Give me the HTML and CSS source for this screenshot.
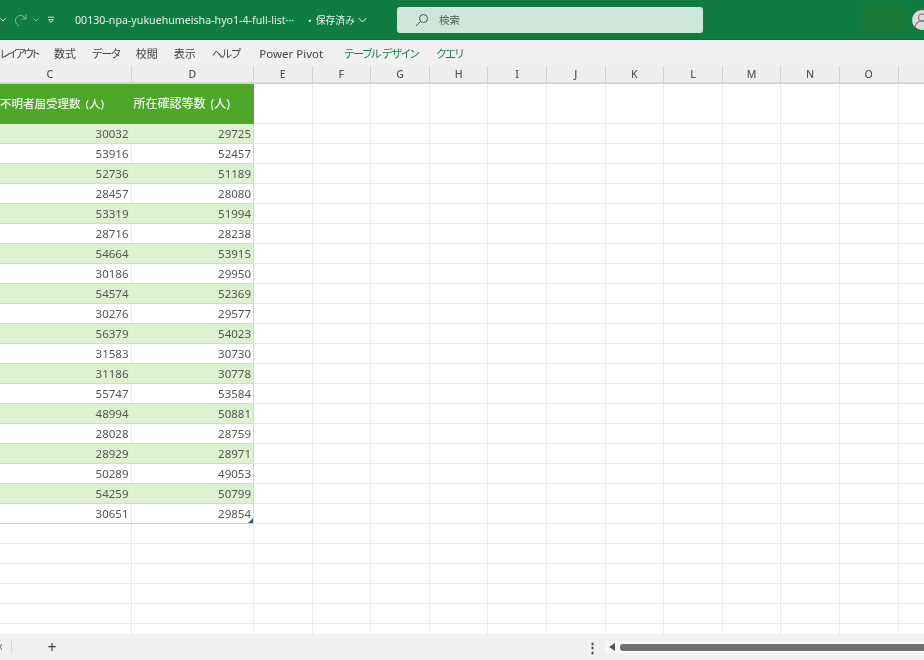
FILE: index.html
```html
<!DOCTYPE html>
<html lang="ja">
<head>
    <meta charset="UTF-8" />
    <meta name="viewport" content="width=device-width, initial-scale=1.0" />
    <title>00130-npa-yukuehumeisha-hyo1-4-full-list</title>
    <link rel="stylesheet" href="styles.css">
</head>
<body>
    <div class="app">
        <!-- Title bar -->
        <header class="titlebar">
            <div class="qat">
                <svg class="chev-small undo-chev" viewBox="0 0 6 4"><path d="M.5.5 3 3 5.500.5"/></svg>
                <svg class="redo" viewBox="0 0 14 14"><path d="M12 1.500V6H7.500M12 6C10 3 7.500 2 5.500 2.500 2.500 3.200 1 6 1.500 8.500 1.900 10.500 3.200 12 5 12.800"/></svg>
                <svg class="chev-small redo-chev" viewBox="0 0 6 4"><path d="M.5.5 3 3 5.500.5"/></svg>
                <svg class="qat-more" viewBox="0 0 8 8"><path d="M1 1.200H7M1.500 3.500 4 6.500 6.500 3.500Z"/></svg>
            </div>
            <span class="filename">00130-npa-yukuehumeisha-hyo1-4-full-list···</span>
            <span class="saved"><span class="saved-dot">•</span>保存済み</span>
            <svg class="saved-chev" viewBox="0 0 9 6"><path d="M.5 1 4.500 5 8.500 1"/></svg>
            <div class="search">
                <svg class="search-icon" viewBox="0 0 14 14"><circle cx="8.500" cy="5.500" r="4"/><path d="M5.500 8.500 1 13"/></svg>
                <span>検索</span>
            </div>
            <div class="patch"></div>
            <div class="avatar">
                <svg viewBox="0 0 20 20"><circle cx="10" cy="7.500" r="3.500"/><path d="M3 17c.8-4 3.500-6 7-6s6.200 2 7 6"/></svg>
            </div>
        </header>

        <!-- Ribbon tabs -->
        <nav class="ribbon">
            <span class="tab kana tab-layout">レイアウト</span>
            <span class="tab">数式</span>
            <span class="tab kana">データ</span>
            <span class="tab">校閲</span>
            <span class="tab">表示</span>
            <span class="tab kana">ヘルプ</span>
            <span class="tab tab-pivot">Power Pivot</span>
            <span class="tab kana context">テーブル デザイン</span>
            <span class="tab kana context tab-query">クエリ</span>
        </nav>

        <!-- Sheet -->
        <main class="sheet">
            <table class="grid">
                <colgroup>
                    <col class="col-c">
                    <col class="col-d">
                    <col class="col-e"><col class="col-f"><col class="col-g">
                    <col class="col-h"><col class="col-i"><col class="col-j">
                    <col class="col-k"><col class="col-l"><col class="col-m">
                    <col class="col-n"><col class="col-o"><col class="col-p">
                </colgroup>
                <thead>
                    <tr class="letters">
                        <th class="letter-c">C</th><th>D</th><th>E</th><th>F</th><th>G</th><th>H</th><th>I</th>
                        <th>J</th><th>K</th><th>L</th><th>M</th><th>N</th><th>O</th><th></th>
                    </tr>
                </thead>
                <tbody id="rows">
                    <tr class="head-row">
                        <td class="head-cell head-c">不明者届受理数 (人)</td>
                        <td class="head-cell">所在確認等数 (人)</td>
                        <td></td><td></td><td></td><td></td><td></td><td></td><td></td><td></td><td></td><td></td><td></td><td></td>
                    </tr>
                    <tr class="band"><td class="num">30032</td><td class="num">29725</td><td></td><td></td><td></td><td></td><td></td><td></td><td></td><td></td><td></td><td></td><td></td><td></td></tr>
                    <tr><td class="num">53916</td><td class="num">52457</td><td></td><td></td><td></td><td></td><td></td><td></td><td></td><td></td><td></td><td></td><td></td><td></td></tr>
                    <tr class="band"><td class="num">52736</td><td class="num">51189</td><td></td><td></td><td></td><td></td><td></td><td></td><td></td><td></td><td></td><td></td><td></td><td></td></tr>
                    <tr><td class="num">28457</td><td class="num">28080</td><td></td><td></td><td></td><td></td><td></td><td></td><td></td><td></td><td></td><td></td><td></td><td></td></tr>
                    <tr class="band"><td class="num">53319</td><td class="num">51994</td><td></td><td></td><td></td><td></td><td></td><td></td><td></td><td></td><td></td><td></td><td></td><td></td></tr>
                    <tr><td class="num">28716</td><td class="num">28238</td><td></td><td></td><td></td><td></td><td></td><td></td><td></td><td></td><td></td><td></td><td></td><td></td></tr>
                    <tr class="band"><td class="num">54664</td><td class="num">53915</td><td></td><td></td><td></td><td></td><td></td><td></td><td></td><td></td><td></td><td></td><td></td><td></td></tr>
                    <tr><td class="num">30186</td><td class="num">29950</td><td></td><td></td><td></td><td></td><td></td><td></td><td></td><td></td><td></td><td></td><td></td><td></td></tr>
                    <tr class="band"><td class="num">54574</td><td class="num">52369</td><td></td><td></td><td></td><td></td><td></td><td></td><td></td><td></td><td></td><td></td><td></td><td></td></tr>
                    <tr><td class="num">30276</td><td class="num">29577</td><td></td><td></td><td></td><td></td><td></td><td></td><td></td><td></td><td></td><td></td><td></td><td></td></tr>
                    <tr class="band"><td class="num">56379</td><td class="num">54023</td><td></td><td></td><td></td><td></td><td></td><td></td><td></td><td></td><td></td><td></td><td></td><td></td></tr>
                    <tr><td class="num">31583</td><td class="num">30730</td><td></td><td></td><td></td><td></td><td></td><td></td><td></td><td></td><td></td><td></td><td></td><td></td></tr>
                    <tr class="band"><td class="num">31186</td><td class="num">30778</td><td></td><td></td><td></td><td></td><td></td><td></td><td></td><td></td><td></td><td></td><td></td><td></td></tr>
                    <tr><td class="num">55747</td><td class="num">53584</td><td></td><td></td><td></td><td></td><td></td><td></td><td></td><td></td><td></td><td></td><td></td><td></td></tr>
                    <tr class="band"><td class="num">48994</td><td class="num">50881</td><td></td><td></td><td></td><td></td><td></td><td></td><td></td><td></td><td></td><td></td><td></td><td></td></tr>
                    <tr><td class="num">28028</td><td class="num">28759</td><td></td><td></td><td></td><td></td><td></td><td></td><td></td><td></td><td></td><td></td><td></td><td></td></tr>
                    <tr class="band"><td class="num">28929</td><td class="num">28971</td><td></td><td></td><td></td><td></td><td></td><td></td><td></td><td></td><td></td><td></td><td></td><td></td></tr>
                    <tr><td class="num">50289</td><td class="num">49053</td><td></td><td></td><td></td><td></td><td></td><td></td><td></td><td></td><td></td><td></td><td></td><td></td></tr>
                    <tr class="band"><td class="num">54259</td><td class="num">50799</td><td></td><td></td><td></td><td></td><td></td><td></td><td></td><td></td><td></td><td></td><td></td><td></td></tr>
                    <tr class="last"><td class="num">30651</td><td class="num last-cell">29854<span class="resize"></span></td><td></td><td></td><td></td><td></td><td></td><td></td><td></td><td></td><td></td><td></td><td></td><td></td></tr>
                    <tr><td></td><td></td><td></td><td></td><td></td><td></td><td></td><td></td><td></td><td></td><td></td><td></td><td></td><td></td></tr>
                    <tr><td></td><td></td><td></td><td></td><td></td><td></td><td></td><td></td><td></td><td></td><td></td><td></td><td></td><td></td></tr>
                    <tr><td></td><td></td><td></td><td></td><td></td><td></td><td></td><td></td><td></td><td></td><td></td><td></td><td></td><td></td></tr>
                    <tr><td></td><td></td><td></td><td></td><td></td><td></td><td></td><td></td><td></td><td></td><td></td><td></td><td></td><td></td></tr>
                    <tr><td></td><td></td><td></td><td></td><td></td><td></td><td></td><td></td><td></td><td></td><td></td><td></td><td></td><td></td></tr>
                    <tr><td></td><td></td><td></td><td></td><td></td><td></td><td></td><td></td><td></td><td></td><td></td><td></td><td></td><td></td></tr>
                </tbody>
            </table>
        </main>

        <!-- Sheet tabs and scroll bar -->
        <footer class="statusbar">
            <span class="tab-edge">
                <svg class="tab-nav" viewBox="0 0 2 6"><path d="M2 0 0 3 2 6"/></svg>
            </span>
            <span class="add-sheet">+</span>
            <span class="kebab">⋮</span>
            <div class="scroll">
                <span class="scroll-arrow"></span>
                <span class="scroll-thumb"></span>
            </div>
        </footer>
    </div>
</body>
</html>
```
FILE: styles.css
```css
/* Global styles */
* {
    box-sizing: border-box;
}

html,
body {
    margin: 0;
    height: 100%;
    overflow: hidden;
    background-color: #fff;
}

body {
    font-family: "Noto Sans", "Noto Sans CJK JP", sans-serif;
    color: #444;
}

.app {
    display: flex;
    flex-direction: column;
    width: 924px;
    height: 660px;
    overflow: hidden;
    filter: blur(0.45px);
}

/* Title bar */
.titlebar {
    display: flex;
    align-items: center;
    flex: 0 0 40px;
    background-color: #107c41;
    color: #e6f2ea;
    border-bottom: 1px solid #0f6b3a;
    overflow: hidden;
}

.titlebar > * {
    flex: none;
}

.qat {
    display: flex;
    align-items: center;
    width: 75px;
    height: 100%;
}

.qat svg {
    fill: none;
    stroke: #cfe5da;
    stroke-width: 1;
}

.chev-small {
    width: 6px;
    height: 4px;
}

.undo-chev {
    stroke: #e6f2ea;
}

.redo {
    width: 14px;
    height: 14px;
    margin-left: 8px;
    opacity: 0.6;
}

.redo-chev {
    margin-left: 5px;
    opacity: 0.6;
}

.qat-more {
    width: 8px;
    height: 8px;
    margin-left: 8px;
}

.filename {
    width: 233px;
    font-size: 10.65px;
    white-space: nowrap;
}

.saved {
    width: 50px;
    font-size: 9.800px;
    white-space: nowrap;
}

.saved-dot {
    margin-right: 4px;
}

.saved-chev {
    width: 9px;
    height: 6px;
    fill: none;
    stroke: #e6f2ea;
}

.search {
    display: flex;
    align-items: center;
    width: 306px;
    height: 26px;
    margin-left: 30px;
    padding-left: 18px;
    background-color: #cfe5da;
    border-radius: 3px;
    color: #44635a;
    font-size: 10.5px;
}

.search-icon {
    width: 14px;
    height: 14px;
    margin-right: 10px;
    fill: none;
    stroke: #2f5f4c;
    stroke-width: 1;
}

.patch {
    width: 44px;
    height: 28px;
    margin-left: 158px;
    background-color: #1b7a39;
}

.avatar {
    width: 20px;
    height: 20px;
    margin-left: 7px;
    background-color: #dcdcdc;
    border-radius: 50%;
}

.avatar svg {
    display: block;
    width: 20px;
    height: 20px;
    fill: none;
    stroke: #777;
    stroke-width: 1.2;
}

/* Ribbon */
.ribbon {
    display: flex;
    align-items: center;
    gap: 16px;
    flex: 0 0 26px;
    background-color: #f0f0f0;
    font-size: 11px;
    font-feature-settings: "palt";
    color: #444;
    white-space: nowrap;
}

.tab.kana {
    letter-spacing: -1px;
}

.tab-layout {
    width: 38px;
}

.tab.tab-layout {
    letter-spacing: -2px;
}

.tab-pivot {
    margin-left: 3px;
    margin-right: 5px;
    font-size: 11.5px;
}

.tab.context {
    color: #1f7a4d;
}

.tab-query {
    margin-left: 2px;
}

/* Sheet */
.sheet {
    flex: 1;
    overflow: hidden;
    background-color: #fff;
}

.grid {
    table-layout: fixed;
    border-collapse: collapse;
    width: 956.700px;
}

.col-c { width: 131px; }
.col-d { width: 122.500px; }
.col-e, .col-f, .col-g, .col-h, .col-i, .col-j,
.col-k, .col-l, .col-m, .col-n, .col-o, .col-p { width: 58.600px; }

.letters th {
    height: 17px;
    padding: 0;
    background-color: #eeeeee;
    border-right: 1px solid #d4d4d4;
    border-bottom: 1px solid #cfcfcf;
    box-shadow: inset 0 -1px #d8d8d8;
    color: #555;
    font-size: 10.5px;
    font-weight: 500;
    text-align: center;
}

.letters .letter-c {
    padding-right: 31px;
}

.grid td {
    height: 20px;
    padding: 0 2px;
    border-right: 1px solid #ececec;
    border-bottom: 1px solid #ececec;
    font-size: 11.5px;
    line-height: 18px;
}

.grid .head-row td {
    height: 40px;
}

.grid .head-cell {
    padding-top: 2px;
    background-color: #4ea72a;
    border-color: #4ea72a;
    color: #eef7e8;
    font-size: 12px;
    font-weight: 500;
    word-spacing: 2px;
    white-space: nowrap;
    padding-left: 2px;
}

.grid .head-c {
    padding-left: 0;
    font-size: 11.5px;
}

.grid .num {
    padding-top: 1px;
    text-align: right;
    color: #555;
    border-bottom-color: #c6e6b5;
}

.grid .band .num {
    background-color: #dcf2d0;
}

.grid .num + .num {
    border-right-color: #c6e6b5;
}

.grid .last .num {
    border-bottom: 1px solid #b6e3a0;
}

.last-cell {
    position: relative;
}

.resize {
    position: absolute;
    right: 0;
    bottom: 0;
    width: 0;
    height: 0;
    border-left: 5px solid transparent;
    border-bottom: 5px solid #2f5597;
}

/* Status bar */
.statusbar {
    display: flex;
    align-items: center;
    flex: 0 0 26px;
    background-color: #f0f0f0;
    font-size: 16px;
    color: #444;
}

.tab-edge {
    display: flex;
    align-items: center;
    width: 12px;
    height: 14px;
    border-right: 1px solid #dadada;
}

.tab-nav {
    width: 2px;
    height: 6px;
    fill: none;
    stroke: #666;
    stroke-width: 1;
}

.add-sheet {
    width: 14px;
    margin-left: 33px;
    text-align: center;
    line-height: 1;
}

.kebab {
    width: 8px;
    margin-left: 527px;
    font-size: 13px;
    font-weight: 700;
    text-align: center;
}

.scroll {
    display: flex;
    align-items: center;
    flex: 1;
    height: 12px;
    margin-left: 11px;
    padding-left: 4px;
    background-color: #f8f8f8;
}

.scroll-arrow {
    width: 0;
    height: 0;
    margin-right: 5px;
    border-top: 4px solid transparent;
    border-bottom: 4px solid transparent;
    border-right: 6px solid #555;
}

.scroll-thumb {
    flex: 1;
    height: 7px;
    background-color: #707070;
    border-radius: 3px 0 0 3px;
}
```
